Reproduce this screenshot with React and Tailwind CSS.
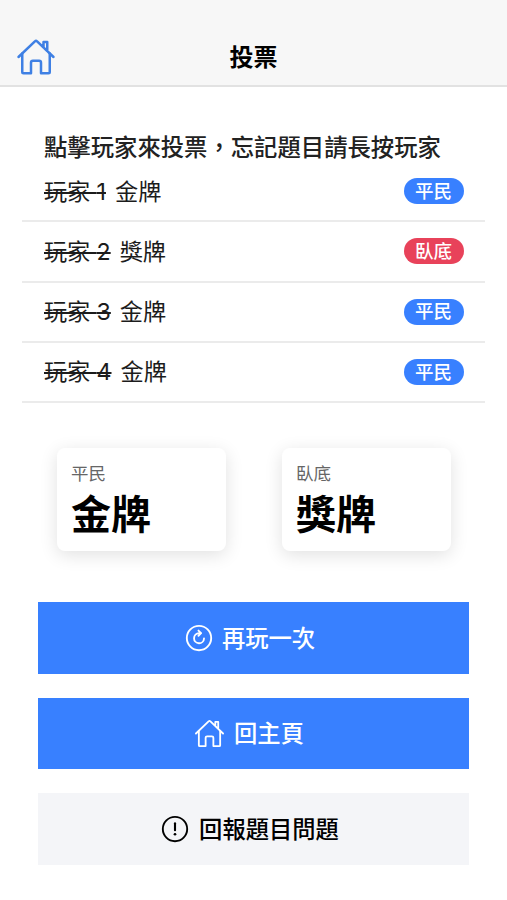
const players = [
  { id: 1, word: '金牌', spy: false },
  { id: 2, word: '獎牌', spy: true },
  { id: 3, word: '金牌', spy: false },
  { id: 4, word: '金牌', spy: false },
];

const words = [
  { role: '平民', word: '金牌' },
  { role: '臥底', word: '獎牌' },
];

function HomeIcon({ className, strokeWidth = 30 }) {
  return (
    <svg
      viewBox="0 0 512 512"
      className={className}
      fill="none"
      stroke="currentColor"
      strokeWidth={strokeWidth}
      strokeLinecap="round"
      strokeLinejoin="round"
    >
      <path d="M80 212v236a16 16 0 0016 16h96V328a24 24 0 0124-24h80a24 24 0 0124 24v136h96a16 16 0 0016-16V212" />
      <path d="M480 256L266.89 52c-5-5.28-16.69-5.34-21.78 0L32 256M400 179V64h-48v69" />
    </svg>
  );
}

function ReloadIcon({ className }) {
  return (
    <svg
      viewBox="0 0 512 512"
      className={className}
      fill="none"
      stroke="currentColor"
      strokeWidth="32"
      strokeLinecap="round"
      strokeLinejoin="round"
    >
      <circle cx="256" cy="256" r="208" />
      <path d="M341.54 264a85 85 0 11-85-88.5h28" />
      <path d="M247 130l44 44-44 44" />
    </svg>
  );
}

function AlertIcon({ className }) {
  return (
    <svg viewBox="0 0 512 512" className={className} fill="none" stroke="currentColor" strokeLinecap="round">
      <circle cx="256" cy="256" r="208" strokeWidth="32" />
      <path d="M256 158v118" strokeWidth="36" />
      <circle cx="256" cy="346" r="23" fill="currentColor" stroke="none" />
    </svg>
  );
}

function PlayerRow({ player }) {
  return (
    <li className="flex h-[60.25px] items-center justify-between border-b-2 border-[#ebebeb] pr-[21px] pl-[22px]">
      <span className="pt-px text-[23.2px] leading-8 text-[#1c1c1c]">
        <s className="tracking-[-0.1px] decoration-2">玩家 {player.id}</s>
        <span className="ml-[9px]">{player.word}</span>
      </span>
      <span
        className={`flex h-[26px] w-[60px] items-center justify-center rounded-full pr-px text-[18.5px] font-medium leading-none text-white ${
          player.spy ? 'bg-[#e8425a]' : 'bg-[#3880ff]'
        }`}
      >
        {player.spy ? '臥底' : '平民'}
      </span>
    </li>
  );
}

export default function App() {
  return (
    <div
      lang="zh-Hant"
      className="h-[900px] w-full overflow-hidden bg-white font-[Inter,'Noto_Sans_CJK_TC',sans-serif] text-black"
    >
      {/* header */}
      <header className="grid h-[87px] grid-cols-[1fr_auto_1fr] items-center border-b-2 border-[#e2e2e2] bg-[#f7f7f7] px-4 pt-7">
        <button className="w-fit text-[#3f80e4]">
          <HomeIcon className="size-10" strokeWidth={32} />
        </button>
        <h1 className="pt-0.5 text-[24px] leading-8 font-bold">投票</h1>
      </header>

      {/* players */}
      <main className="pt-[45px]">
        <section className="mx-[22px]">
          <p className="pl-[22px] text-[23.35px] leading-8 font-medium whitespace-nowrap text-[#222]">
            點擊玩家來投票，忘記題目請長按玩家
          </p>
          <ul className="-mt-[2px]">
            {players.map((player) => (
              <PlayerRow key={player.id} player={player} />
            ))}
          </ul>
        </section>

        {/* words */}
        <section className="mt-[45px] ml-[57px] flex gap-14">
          {words.map(({ role, word }) => (
            <div
              key={role}
              className="h-[103px] w-[169px] rounded-lg bg-white px-[14px] pt-4 shadow-[0_4px_18px_rgba(0,0,0,0.12)]"
            >
              <div className="text-[17.5px] leading-5 text-[#666]">{role}</div>
              <div className="mt-[7px] text-[40px] leading-[48px] font-bold">{word}</div>
            </div>
          ))}
        </section>

        {/* actions */}
        <section className="mx-[38px] mt-[51px] flex flex-col gap-6 text-[23.3px] font-medium">
          <button className="flex h-[71.5px] items-center justify-center bg-[#3880ff] pr-2 text-white">
            <ReloadIcon className="mr-2 size-[30px]" />
            <span className="pt-[3px]">再玩一次</span>
          </button>
          <button className="flex h-[71.5px] items-center justify-center bg-[#3880ff] pr-[9px] text-white">
            <HomeIcon className="mr-[9px] size-[31px]" />
            <span className="pt-[3px]">回主頁</span>
          </button>
          <button className="flex h-[71.5px] items-center justify-center bg-[#f4f5f8] pr-2 text-black">
            <AlertIcon className="mr-[9px] size-[30px]" />
            <span className="pt-[3px]">回報題目問題</span>
          </button>
        </section>
      </main>
    </div>
  );
}
